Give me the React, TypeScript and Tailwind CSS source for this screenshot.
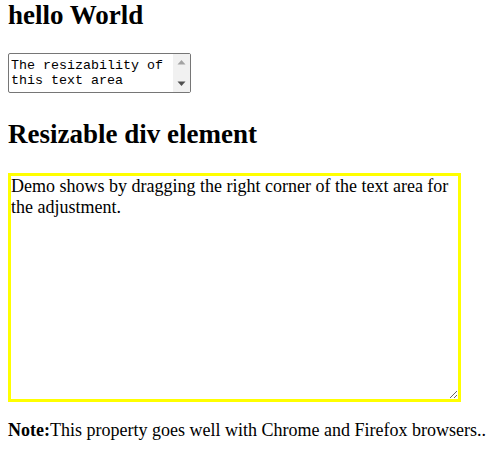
export default function App() {
  return (
    <div className="min-h-screen bg-white px-2 text-black font-['Liberation_Serif',serif]">
      <h2 className="text-[27px] font-bold leading-[normal]">hello World</h2>

      {/* textarea with a drawn classic scrollbar (headless one is overlay) */}
      <div className="relative mt-[22px] h-[40px] w-[183px]">
        <textarea
          className="block h-full w-full resize-none overflow-hidden rounded-[2px] border border-[#767676] pl-[2px] pr-[19px] pt-[4px] font-['Liberation_Mono',monospace] text-[13.33px] leading-[15px] text-black outline-none"
          defaultValue="The resizability of this text area"
        />
        <div className="absolute bottom-[1px] right-[1px] top-[1px] flex w-[17px] flex-col justify-between bg-[#f1f1f1] py-[5px]">
          <svg width="17" height="6" viewBox="0 0 17 6">
            <path d="M4.5 5.5 L8.5 1 L12.5 5.5 Z" fill="#a3a3a3" />
          </svg>
          <svg width="17" height="6" viewBox="0 0 17 6">
            <path d="M4.5 0.5 L8.5 5 L12.5 0.5 Z" fill="#505050" />
          </svg>
        </div>
      </div>

      <h2 className="mt-[26px] text-[27px] font-bold leading-[normal]">Resizable div element</h2>

      <div className="mt-[23px] h-[229px] w-[453px] resize overflow-auto border-[3px] border-[#ffff00] text-[18px] leading-[normal]">
        Demo shows by dragging the right corner of the text area for the adjustment.
      </div>

      <p className="mt-[18px] text-[18px] leading-[normal]">
        <b>Note:</b>This property goes well with Chrome and Firefox browsers..
      </p>
    </div>
  );
}
